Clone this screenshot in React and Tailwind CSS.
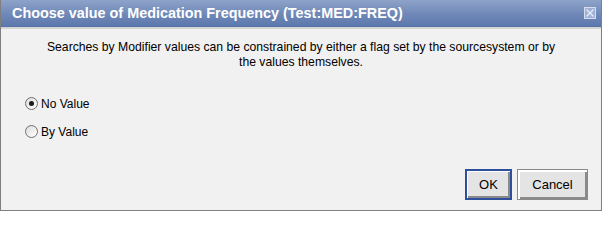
import React from "react";

function Radio({ checked }) {
  return (
    <span className="relative inline-block w-[13px] h-[13px] rounded-full border border-[#707070] bg-[linear-gradient(135deg,#dcdcdc,#ffffff)] shrink-0">
      {checked && (
        <span className="absolute left-[3px] top-[3px] w-[5px] h-[5px] rounded-full bg-[#1a1a1a]" />
      )}
    </span>
  );
}

export default function App() {
  return (
    <div
      className="w-[602px] h-[211px] flex flex-col border border-[#7f7f7f] border-t-0 bg-[#f1f1f1] text-black"
      style={{ fontFamily: '"Liberation Sans", Arial, sans-serif' }}
    >
      <div className="h-[27px] flex items-center justify-between pl-[11px] pr-[5px] bg-[linear-gradient(180deg,#8ea3c9_0%,#6f88b8_55%,#5d78ad_100%)] border-b border-[#5572a8]">
        <span className="text-white font-bold text-[14.4px] leading-none">
          Choose value of Medication Frequency (Test:MED:FREQ)
        </span>
        <span className="w-[12px] h-[12px] border border-[#d6def0] bg-[#9fb1d6] flex items-center justify-center">
          <svg width="10" height="10" viewBox="0 0 10 10">
            <path d="M1.5 1.5 L8.5 8.5 M8.5 1.5 L1.5 8.5" stroke="#e8eefa" strokeWidth="1.3" />
          </svg>
        </span>
      </div>
      <div className="h-[2px] bg-[#d4d4d4]" />
      <div className="flex-1 flex flex-col px-[24px]">
        <p className="mt-[11px] text-center text-[12.2px] leading-[15px] px-[18px]">
          Searches by Modifier values can be constrained by either a flag set by the sourcesystem or by the values themselves.
        </p>
        <div className="mt-[27px] flex flex-col gap-[15px] text-[12px]">
          <label className="flex items-center gap-[3px] h-[13px]">
            <Radio checked />
            <span>No Value</span>
          </label>
          <label className="flex items-center gap-[3px] h-[13px]">
            <Radio />
            <span>By Value</span>
          </label>
        </div>
        <div className="mt-auto mb-[10px] flex justify-end gap-[5px] mr-[-11px]">
          <button className="w-[47px] h-[31px] border-2 border-[#2d4f9c] bg-[#e4e4e4] text-[13px] shadow-[inset_1px_1px_0_#ffffff,inset_-2px_-2px_0_#8a8a8a]">
            OK
          </button>
          <button className="w-[71px] h-[31px] border border-[#8a8a8a] bg-[#e4e4e4] text-[13px] shadow-[inset_1px_1px_0_#ffffff,inset_2px_2px_0_#ffffff,inset_-2px_-2px_0_#8a8a8a]">
            Cancel
          </button>
        </div>
      </div>
    </div>
  );
}
